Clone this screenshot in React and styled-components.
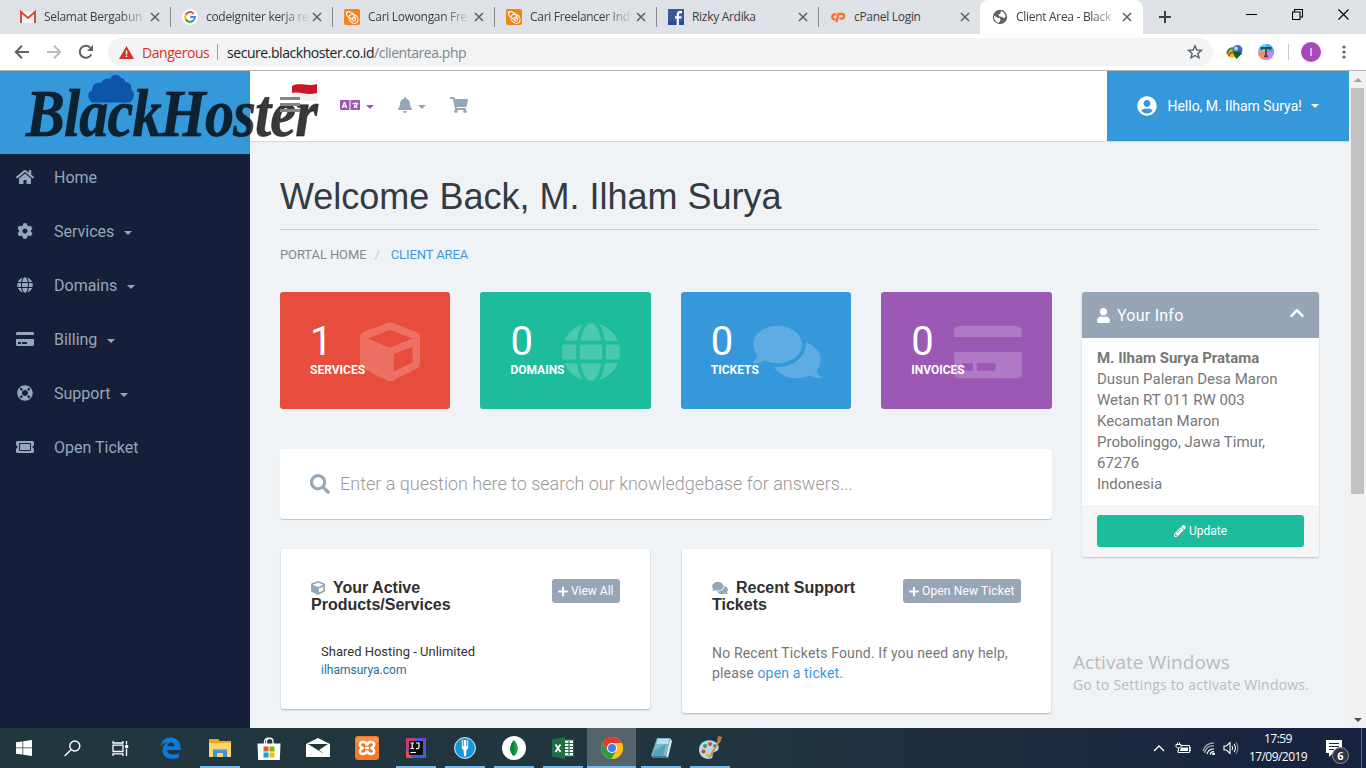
import React from 'react';
import styled, { createGlobalStyle, css } from 'styled-components';
import {
  FaHome, FaCog, FaGlobe, FaCreditCard, FaLifeRing, FaTicketAlt, FaCube, FaComments,
  FaSearch, FaUser, FaUserCircle, FaPencilAlt, FaPlus, FaBell, FaShoppingCart,
  FaChevronUp, FaLanguage,
} from 'react-icons/fa';

const Global = createGlobalStyle`
  *, *::before, *::after { box-sizing: border-box; }
  body { margin: 0; overflow: hidden; font-family: Roboto, "Liberation Sans", sans-serif; }
  svg { display: block; flex: none; }
`;

const segoe = css`font-family: "Open Sans", "Noto Sans", sans-serif;`;

const Screen = styled.div`
  width: 1366px; height: 768px; display: flex; flex-direction: column;
  overflow: hidden; background: #fff; position: relative;
`;

/* ---------- browser chrome ---------- */
const TabStrip = styled.div`
  height: 34px; flex: none; display: flex; background: #dee1e6; padding-left: 8px;
`;
const Tab = styled.div`
  width: ${p => (p.$active ? 163 : 162)}px; height: 34px; padding: 0 7px 0 12px;
  display: flex; align-items: center; position: relative;
  background: ${p => (p.$active ? '#fff' : 'transparent')};
  border-radius: 8px 8px 0 0;
  ${p => p.$divider && css`
    &::after { content: ''; position: absolute; right: -1px; top: 7px; width: 1px; height: 20px; background: #85878b; }
  `}
`;
const TabTitle = styled.span`
  ${segoe} font-size: 12px; letter-spacing: -0.3px; color: #3c4043; width: 103px; margin-left: 8px;
  white-space: nowrap; line-height: 18px;
  ${p => p.$fade && css`mask-image: linear-gradient(90deg, #000 72%, rgba(0, 0, 0, 0.12) 97%);`}
`;
const NewTab = styled.div`
  width: 44px; display: flex; align-items: center; justify-content: center;
`;
const WindowButtons = styled.div`
  margin-left: auto; display: flex; align-items: center; height: 29px;
  & > svg { margin-left: 35px; }
  padding-right: 17px;
`;
const Toolbar = styled.div`
  height: 37px; flex: none; display: flex; align-items: center; padding: 0 14px;
  background: #fff; border-bottom: 1px solid #b5b4b6;
  & > svg:nth-child(2) { margin-left: 16px; }
  & > svg:nth-child(3) { margin-left: 16px; }
`;
const Omnibox = styled.div`
  ${segoe} width: 1105px; height: 28px; margin-left: 14px; border-radius: 14px; background: #f1f3f4;
  display: flex; align-items: center; padding: 0 10px 0 11px; font-size: 14px; color: #202124; white-space: nowrap;
`;
const Danger = styled.span`color: #d93025; margin-left: 8px; letter-spacing: -0.45px; width: 68px;`;
const OmniRule = styled.span`width: 1px; height: 16px; background: #9a9da1; margin: 0 9px 0 7px;`;
const Url = styled.span`letter-spacing: -0.45px;`;
const UrlPath = styled.span`color: #80868b;`;
const Extensions = styled.div`
  margin-left: 13px; display: flex; align-items: center; flex: 1;
`;
const ExtGap = styled.span`width: 14px;`;
const ExtRule = styled.span`width: 1px; height: 16px; background: #c8cacd; margin: 0 12px 0 14px;`;
const Profile = styled.span`
  width: 20px; height: 20px; border-radius: 50%; background: #ab47bc; color: #fff;
  display: flex; align-items: center; justify-content: center; font-size: 11px; margin-right: 21px;
`;

/* ---------- page frame ---------- */
const Viewport = styled.div`height: 657px; flex: none; display: flex; background: #eff3f6;`;
const Sidebar = styled.aside`width: 250px; flex: none; background: #161f3a; position: relative; z-index: 2;`;
const Brand = styled.div`height: 83px; background: #3598db; position: relative;`;
const Nav = styled.nav`padding: 11px 0 0 15px; display: flex; flex-direction: column; gap: 30px;`;
const NavItem = styled.a`
  height: 24px; display: flex; align-items: center; color: #95a7b8; font-size: 16px;
`;
const NavIcon = styled.span`
  width: 20px; margin-right: 19px; display: flex; justify-content: center;
  svg { height: 16px; width: 18px; }
`;
const Caret = styled.span`
  width: 0; height: 0; border: 4px solid transparent; border-top-color: currentColor;
  border-bottom: 0; margin-left: ${p => p.$gap}px; margin-top: ${p => p.$drop || 3}px;
`;
const LogoText = styled.div`
  position: absolute; left: 26px; top: 4px; line-height: 76px; white-space: nowrap;
  font-family: "Liberation Serif", serif; font-weight: 700; font-style: italic; font-size: 68px;
  letter-spacing: -1px; color: rgba(0, 0, 0, 0.775); -webkit-text-stroke: 1px rgba(0, 0, 0, 0.5);
  transform: scaleX(0.855); transform-origin: 0 50%; pointer-events: none;
`;
const LogoCloud = styled.svg`position: absolute; left: 87px; top: 3px;`;
const LogoFlag = styled.svg`position: absolute; left: 291px; top: 12px;`;

const Page = styled.div`width: 1099px; flex: none; display: flex; flex-direction: column;`;
const TopBar = styled.header`
  height: 71px; background: #fff; border-bottom: 1px solid #d5d9dd; display: flex; align-items: center;
  padding: 0 0 2px 30px; flex: none; color: #94a6b7;
`;
const Burger = styled.span`
  width: 20px; height: 15px; border-top: 3px solid #858585; border-bottom: 3px solid #858585;
  display: flex; align-items: center; margin-right: 40px; margin-bottom: 1px;
  position: relative; z-index: 3;
  &::before { content: ''; width: 20px; height: 3px; background: #858585; }
`;
const TopItem = styled.span`
  display: flex; align-items: center; margin-right: ${p => p.$mr}px; color: ${p => p.$color || 'inherit'};
  svg { height: 16px; width: ${p => p.$w}px; }
`;
const UserMenu = styled.div`
  margin-left: auto; align-self: flex-start; height: 70px; width: 242px; background: #3598db; color: #fff;
  display: flex; align-items: center; padding: 0 0 1px 30px; font-size: 14px; letter-spacing: -0.02px;
  svg { width: 20px; height: 20px; margin-right: 10.5px; }
`;
const Content = styled.main`padding: 0 30px; display: flex; flex-direction: column;`;
const Heading = styled.h1`
  margin: 0; height: 88px; padding-top: 33px; border-bottom: 1px solid #c8ccd1;
  font: 400 36px/44px "Liberation Sans", Arial, sans-serif; color: #333a42;
`;
const Crumbs = styled.div`
  display: flex; margin-top: 15px; height: 20px; line-height: 20px; font-size: 13px; color: #888; margin-bottom: 27px;
  letter-spacing: -0.1px;
`;
const Slash = styled.span`color: #ccc; margin: 0 11px 0 8px;`;
const Current = styled.span`color: #3f97d9;`;
const Columns = styled.div`display: flex; gap: 30.4px; align-items: flex-start;`;
const Main = styled.section`width: 771.6px; flex: none; display: flex; flex-direction: column;`;
const Tiles = styled.div`display: grid; grid-template-columns: repeat(4, 1fr); gap: 30px;`;
const Tile = styled.div`
  height: 117px; border-radius: 3px; background: ${p => p.$bg}; color: #fff; padding: 30px; position: relative;
  display: flex; flex-direction: column;
`;
const TileIcon = styled.span`
  position: absolute; right: 30px; top: 30px; opacity: 0.2;
  svg { height: 60px; width: ${p => p.$w}px; }
`;
const TileNumber = styled.strong`font-size: 40px; font-weight: 400; line-height: 40px; position: relative;`;
const TileLabel = styled.span`font-size: 12px; font-weight: 700; line-height: 16px; position: relative;`;
const SearchBox = styled.div`
  margin-top: 40px; height: 70px; border-radius: 3px; background: #fff; box-shadow: 0 1px 1px rgba(0, 0, 0, 0.18);
  display: flex; align-items: center; padding-left: 30px; padding-bottom: 1px; color: #999; font-size: 18px; font-weight: 300;
  svg { width: 20px; height: 20px; color: #95a7b8; margin-right: 10px; }
`;
const Cards = styled.div`display: flex; gap: 32px; margin-top: 30px; align-items: flex-start; padding-left: 1px;`;
const Card = styled.div`
  width: 369px; height: ${p => p.$h}px; background: #fff; border-radius: 3px; box-shadow: 0 1px 2px rgba(0, 0, 0, 0.25);
  padding: 30px;
`;
const CardHead = styled.div`display: flex; justify-content: space-between; align-items: flex-start;`;
const CardTitle = styled.h3`
  margin: 0; width: 165px; font: 700 16px/17px "Liberation Sans", Arial, sans-serif; color: #2f2f2f;
  svg { display: inline-block; height: 14px; width: ${p => p.$w}px; color: #95a7b8; margin-right: 8px; vertical-align: -2px; }
`;
const SmallButton = styled.span`
  height: 24px; border-radius: 3px; background: #96a6b7; color: #fff; font-size: 12px; padding: 0 6.5px;
  display: flex; align-items: center; white-space: nowrap; letter-spacing: ${p => p.$ls || 0}px;
  svg { width: 10px; height: 11px; margin-right: 2.5px; }
`;
const Product = styled.div`margin: 29px 0 0 10px; font-size: 13px; line-height: 19px; color: #333;`;
const ProductDomain = styled.div`font-size: 12px; line-height: 18px; color: #1f6e94;`;
const Note = styled.p`margin: 30px -10px 0 0; font-size: 14px; line-height: 20px; color: #777; letter-spacing: 0.15px;`;
const Link = styled.a`color: #3f97d9;`;
const Panel = styled.aside`
  width: 237px; border-radius: 3px; overflow: hidden; box-shadow: 0 1px 2px rgba(0, 0, 0, 0.2); background: #fff;
`;
const PanelHead = styled.div`
  height: 46px; background: #96a6b7; color: #fff; display: flex; align-items: center; padding: 0 15px; font-size: 16px;
  letter-spacing: 0.25px;
  & > svg:first-child { width: 13px; height: 15px; margin-right: 7px; }
  & > svg:last-child { width: 14px; height: 16px; margin: -4px 0 0 auto; }
`;
const PanelBody = styled.div`padding: 10px 15px; font-size: 15px; line-height: 21px; color: #777;`;
const PanelFoot = styled.div`height: 52px; padding: 10px 15px; background: #f5f5f5;`;
const Update = styled.div`
  height: 32px; border-radius: 3px; background: #1cbc9c; color: #fff; font-size: 12px;
  display: flex; align-items: center; justify-content: center;
  svg { width: 12px; height: 12px; margin-right: 3px; }
`;
const Scrollbar = styled.div`
  width: 17px; flex: none; background: #f1f1f1; display: flex; flex-direction: column; align-items: center;
`;
const ScrollArrow = styled.span`
  height: 17px; width: 17px; display: flex; align-items: center; justify-content: center;
`;
const Thumb = styled.span`width: 13px; height: 406px; background: #c1c1c1; margin-bottom: auto;`;
const Watermark = styled.div`
  ${segoe} position: absolute; left: 1073px; top: 650px; color: #b9bbbd; white-space: nowrap; z-index: 4;
`;
const WatermarkTitle = styled.div`font-size: 19px; line-height: 24px; letter-spacing: 0.05px;`;
const WatermarkText = styled.div`font-size: 14px; line-height: 22px; letter-spacing: 0.19px;`;

/* ---------- taskbar ---------- */
const Taskbar = styled.footer`
  height: 40px; flex: none; display: flex; color: #fff;
  background: linear-gradient(90deg, #22363e 0%, #21353f 50%, #1d2c3f 75%, #18233f 95%, #172240 100%);
`;
const Task = styled.div`
  width: ${p => p.$w || 49}px; height: 40px; display: flex; align-items: center; justify-content: center; position: relative;
  background: ${p => (p.$active ? '#53646d' : 'transparent')};
  &::after {
    content: ''; position: absolute; bottom: 0; height: 2px; background: #76b9ed;
    width: ${p => (p.$active ? 49 : p.$open ? 40 : 0)}px;
  }
`;
const Gap = styled.span`width: 2.6px; margin-right: -0.3px;`;
const Tray = styled.div`margin-left: auto; display: flex; align-items: center;`;
const TrayIcon = styled.svg`margin-left: ${p => p.$ml}px;`;
const Clock = styled.div`
  ${segoe} width: 66px; font-size: 12px; line-height: 18px; text-align: center; letter-spacing: -0.55px; margin: 0 0 0 6px;
`;
const Notices = styled.div`position: relative; margin: 0 12px 0 14px; padding-top: 4px; width: 24px; height: 24px;`;
const Badge = styled.span`
  position: absolute; left: 7px; top: 11px; width: 17px; height: 17px; border-radius: 50%;
  background: #30343f; border: 1px solid #8e939b; font: 700 11px/15px "Open Sans", sans-serif; text-align: center;
`;
const DesktopEdge = styled.span`width: 5px; height: 40px; border-left: 1px solid #5b6580;`;
const StarIcon = styled.svg`margin-left: auto;`;

const Stroke = ({ w = 16, h = 16, d, sw = 1.5, c = '#5f6368', vb }) => (
  <svg width={w} height={h} viewBox={vb || `0 0 ${w} ${h}`} fill="none" stroke={c} strokeWidth={sw}><path d={d} /></svg>
);
const Close = () => <Stroke w={16} h={16} d="M4 4l8 8M12 4l-8 8" sw={1.6} />;

const Gmail = () => (
  <svg width="16" height="16" viewBox="0 0 16 16"><path d="M1 3h14v11H1z" fill="#f2f2f2" /><path d="M1 14V3l7 6 7-6v11" fill="none" stroke="#d54b3d" strokeWidth="2" /></svg>
);
const Google = () => (
  <svg width="16" height="16" viewBox="0 0 16 16"><circle cx="8" cy="8" r="8" fill="#fff" />
    <g fill="none" strokeWidth="2"><path d="M11.6 4.6A4.9 4.9 0 0 0 3.7 5.7" stroke="#ea4335" /><path d="M3.7 5.7a4.9 4.9 0 0 0 0 4.6" stroke="#fbbc05" /><path d="M3.7 10.3a4.9 4.9 0 0 0 7.6 1.3" stroke="#34a853" /><path d="M11.3 11.6A4.9 4.9 0 0 0 12.9 8H8.2" stroke="#4285f4" /></g></svg>
);
const Bee = () => (
  <svg width="16" height="16" viewBox="0 0 16 16"><rect width="16" height="16" rx="2" fill="#f08519" />
    <g fill="none" stroke="#fff" strokeWidth="1"><ellipse cx="9.500" cy="9.700" rx="5" ry="4" transform="rotate(42 9.500 9.700)" /><ellipse cx="6.600" cy="6.300" rx="4.800" ry="2.600" transform="rotate(38 6.600 6.300)" /><circle cx="9.800" cy="10" r="2" /><path d="M1.500 2.500Q2.500 4 4 4" /></g></svg>
);
const Facebook = () => (
  <svg width="16" height="16" viewBox="0 0 16 16"><rect width="16" height="16" fill="#3b5998" /><path d="M0 12h16v4H0z" fill="#2c4a94" /><path d="M14 3.200h-2c-1.700 0-2.200.8-2.200 2.400V16M7 8.400h6.500" stroke="#fff" strokeWidth="2.200" fill="none" /></svg>
);
const CPanel = () => (
  <svg width="16" height="12" viewBox="0 0 17 12" fill="none" stroke="#ff6c2c" strokeWidth="2.400"><path d="M7 3.200H4.500a2.800 2.800 0 0 0 0 5.400H6M6.800 11.500L9.200 2.600h3.300a2.500 2.500 0 0 1 0 5H10" /></svg>
);
const World = () => (
  <svg width="16" height="16" viewBox="0 0 16 16"><circle cx="8" cy="8" r="7.200" fill="#5f6368" /><path d="M8.700 2.300c2.800.3 4.800 2.600 5 5.400L12 9.300l-2-1.500-2.500-.3-1-2 2-1zM2 6.500l3.500 2.200 2.500.6.500 2-2 2.700C3.700 13 1.500 10 2 6.500z" fill="#fff" /></svg>
);
const Idm = () => (
  <svg width="18" height="16" viewBox="0 0 18 16"><ellipse cx="6" cy="9" rx="5.500" ry="4.500" fill="#e6b92f" /><path d="M1.500 10c0-5 4-7 8-5" stroke="#279a3c" strokeWidth="2" fill="none" /><path d="M3 12c1-4 3-4 6-4" stroke="#d8382c" strokeWidth="1.500" fill="none" /><circle cx="11.500" cy="6" r="5" fill="#3b6fc2" /><circle cx="10" cy="4.500" r="2" fill="#b9d3f5" /><path d="M7 8.500l8-1.500-1 2h2.500l-6 6-2-3z" fill="#11631c" /></svg>
);
const TypeExt = () => (
  <svg width="16" height="16" viewBox="0 0 16 16"><circle cx="8" cy="8" r="8" fill="#5cd3ee" /><path d="M0 8h8v8A8 8 0 0 1 0 8z" fill="#ff8a6b" /><path d="M8 8h8a8 8 0 0 1-8 8z" fill="#c985ee" /><path d="M8 0a8 8 0 0 1 8 8H8z" fill="#4aa5f5" /><path d="M3.500 6V4h9v2M8 4v8M6 12.300h4" stroke="#444" strokeWidth="1.800" fill="none" /></svg>
);

const tabs = [
  { icon: <Gmail />, title: 'Selamat Bergabun', fade: true, divider: true },
  { icon: <Google />, title: 'codeigniter kerja re', fade: true, divider: true },
  { icon: <Bee />, title: 'Cari Lowongan Fre', fade: true, divider: true },
  { icon: <Bee />, title: 'Cari Freelancer Ind', fade: true, divider: true },
  { icon: <Facebook />, title: 'Rizky Ardika', divider: true },
  { icon: <CPanel />, title: 'cPanel Login' },
  { icon: <World />, title: 'Client Area - Black', fade: true, active: true },
];

const nav = [
  { icon: <FaHome />, label: 'Home' },
  { icon: <FaCog />, label: 'Services', menu: true },
  { icon: <FaGlobe />, label: 'Domains', menu: true },
  { icon: <FaCreditCard />, label: 'Billing', menu: true },
  { icon: <FaLifeRing />, label: 'Support', menu: true },
  { icon: <FaTicketAlt />, label: 'Open Ticket' },
];

const tiles = [
  { n: 1, label: 'SERVICES', bg: '#e84c3d', icon: <FaCube />, w: 60 },
  { n: 0, label: 'DOMAINS', bg: '#1cbc9c', icon: <FaGlobe />, w: 60 },
  { n: 0, label: 'TICKETS', bg: '#3598db', icon: <FaComments />, w: 68 },
  { n: 0, label: 'INVOICES', bg: '#9b58b5', icon: <FaCreditCard />, w: 68 },
];

const Windows = () => <svg width="16" height="16" viewBox="0 0 16 16" fill="#fff"><path d="M0 2.300l6.500-.9v6.200H0zM7.200 1.300L16 0v7.600H7.200zM0 8.300h6.500v6.300L0 13.700zM7.200 8.300H16V16l-8.800-1.200z" /></svg>;
const Lens = () => <svg width="17" height="17" viewBox="0 0 17 17" fill="none" stroke="#fff" strokeWidth="1.400"><circle cx="10.800" cy="6" r="5" /><path d="M7.200 9.600L.7 16" /></svg>;
const TaskView = () => <svg width="17" height="17" viewBox="0 0 17 17" fill="none" stroke="#fff" strokeWidth="1.300"><path d="M1 1v2h10V1M1 16v-2.200h10V16M1 5.200h10v6.300H1zM14.500 1v3.500M14.500 8.500V16" /><path d="M13.200 5h3v3h-3z" fill="#fff" stroke="none" /></svg>;
const Edge = () => <svg width="21" height="22" viewBox="0 0 21 22"><path d="M.5 9.500C1.300 3.700 5.300.5 10.600.5c6 0 9.900 4.200 9.900 10v2.400H7.200c.2 3 2.700 4.600 6 4.600 2.200 0 4.100-.5 5.900-1.600v4.400c-2 1.100-4.200 1.500-6.900 1.500-6 0-9.700-3.500-9.700-8.600 0-3.600 1.800-6.400 5-8C4 5.800 1.800 7.500.5 9.500zm6.800-.2h7.200c0-2.500-1.200-3.900-3.500-3.900-2 0-3.300 1.400-3.700 3.900z" fill="#0a7bdc" /></svg>;
const Explorer = () => <svg width="22" height="19" viewBox="0 0 22 19"><path d="M0 0h9l2 2h11v16H0z" fill="#e9a820" /><path d="M0 4h22v14H0z" fill="#fcd668" /><path d="M4 18v-8h14v8h-4v-4H8v4z" fill="#3f8fd9" /><path d="M4 10h14v1.500H4z" fill="#65b4ee" /></svg>;
const Store = () => <svg width="24" height="23" viewBox="0 0 24 23"><path d="M7.500 8V4.500a3.500 3.500 0 0 1 5-3M9.500 8V4.500a3.200 3.200 0 0 1 6.500 0V8" fill="none" stroke="#fff" strokeWidth="1.300" /><path d="M.5 6.500h23L22.800 23H1.200z" fill="#fff" /><path d="M6.500 9.500h5v5h-5z" fill="#f25022" /><path d="M12.500 9.500h5v5h-5z" fill="#7fba00" /><path d="M6.500 15.500h5v5h-5z" fill="#00a4ef" /><path d="M12.500 15.500h5v5h-5z" fill="#ffb900" /></svg>;
const Mail = () => <svg width="24" height="20" viewBox="0 0 24 20"><path d="M0 6L12 0l12 6v13H0z" fill="#fff" /><path d="M2 6h20l-9 6 5 4L2 6z" fill="#22363e" /></svg>;
const Xampp = () => <svg width="24" height="24" viewBox="0 0 24 24"><rect width="24" height="24" rx="3" fill="#f4772a" /><rect x="1" y="1" width="22" height="6" rx="2" fill="#f9a36a" opacity=".6" /><path d="M12 9.500C11.500 5 4.500 5 4.800 9c.1 1.600 1.500 2.200 2.500 3-1 .8-2.500 1.600-2.500 3.500 0 3.500 6.500 3.300 7.200-1M12 9.500C12.500 5 19.500 5 19.200 9c-.1 1.600-1.500 2.200-2.500 3 1 .8 2.500 1.600 2.500 3.500 0 3.500-6.500 3.300-7.200-1M10 12h4" fill="none" stroke="#fff" strokeWidth="2.600" /></svg>;
const IntelliJ = () => <svg width="20" height="20" viewBox="0 0 20 20"><path d="M0 0h20v20H0z" fill="#3b5fe0" /><path d="M0 0h11L0 13z" fill="#c93a6f" /><path d="M0 10l6 10H0z" fill="#ee4b55" /><path d="M20 0v10l-7-10z" fill="#7048c8" /><path d="M3 3h14v14H3z" fill="#111" /><path d="M4.500 5h3.500M4.500 10.500H8M6.200 5v5.500M10 5h3v4q0 1.600-1.600 1.600H10M4.500 14.500H10" stroke="#fff" strokeWidth="1.200" fill="none" /></svg>;
const Fork = () => <svg width="22" height="22" viewBox="0 0 22 22"><circle cx="11" cy="11" r="10.400" fill="#1495d4" stroke="#e8f5fb" strokeWidth="1" /><path d="M7.800 3v7c0 2 1 2.500 1.700 3l.5 6q1 1 2 0l.5-6c.7-.5 1.700-1 1.700-3V3h-1v6h-1V3h-2.400v6h-1V3z" fill="#fff" /></svg>;
const Leaf = () => <svg width="24" height="24" viewBox="0 0 24 24"><circle cx="12" cy="12" r="12" fill="#fff" /><path d="M12 4c5.500 6 4.500 13 0 16-4.500-3-5.500-10 0-16z" fill="#14a04b" /><path d="M12 4c-5.500 6-4.500 13 0 16z" fill="#0b803a" /></svg>;
const Excel = () => <svg width="22" height="22" viewBox="0 0 22 22"><path d="M12 3h9.500v16H12z" fill="#fff" stroke="#1d7044" /><path d="M13 6.500h8M13 9.500h8M13 12.500h8M13 15.500h8M17 4v14" stroke="#1d7044" strokeWidth="1.200" /><path d="M0 2.500L13 0v22L0 19.500z" fill="#1d7044" /><path d="M3.500 7.500l5 7.500M8.500 7.500l-5 7.500" stroke="#fff" strokeWidth="1.800" /></svg>;
const Chrome = () => <svg width="22" height="22" viewBox="0 0 22 22"><circle cx="11" cy="11" r="11" fill="#fbc116" /><path d="M1.500 5.500A11 11 0 0 0 10.500 22L15.300 13.500 11 11 6.700 13.500z" fill="#269f48" /><path d="M11 6h9.800A11 11 0 0 1 10.500 22l4.800-8.500z" fill="#fbc116" /><path d="M1.500 5.500A11 11 0 0 1 20.800 6H11a5 5 0 0 0-4.500 7z" fill="#e33b2e" /><circle cx="11" cy="11" r="5" fill="#fff" /><circle cx="11" cy="11" r="4" fill="#4080ee" /></svg>;
const Notepad = () => <svg width="22" height="22" viewBox="0 0 22 22"><path d="M7 1h13l-4 18H1z" fill="#79b9cf" /><path d="M8 2h11l-1 5H6.500z" fill="#bde1ec" /><path d="M20 1l2 3-4 17-2-2z" fill="#d9e7ec" /><path d="M1 19h15l2 2H3z" fill="#4a7b8c" /><path d="M5 13l11-6-3 12H2z" fill="#4c98b4" opacity=".7" /></svg>;
const Paint = () => <svg width="24" height="24" viewBox="0 0 24 24"><path d="M1 14C1 7 7 3.500 13 4.500c7 1 9 6 7 9.500-1 2-4 1-5 3s1 6-4 6C5 23 1 19 1 14z" fill="#b5d9ef" /><circle cx="7" cy="10" r="2" fill="#3a9d42" /><circle cx="12" cy="8" r="2" fill="#d94c32" /><circle cx="5.500" cy="15.500" r="2" fill="#d6412d" /><circle cx="9.500" cy="19" r="1.800" fill="#e8b938" /><circle cx="17" cy="10" r="1.800" fill="#295fb7" /><path d="M11 22L20.500 6" stroke="#d79239" strokeWidth="2" /><path d="M19 6l1-6 4 1-2 6z" fill="#b97c46" /></svg>;

const tasks = [
  { icon: <Edge /> }, { icon: <Explorer />, open: true }, { icon: <Store /> }, { icon: <Mail /> },
  { icon: <Xampp /> }, { icon: <IntelliJ />, open: true }, { icon: <Fork />, open: true },
  { icon: <Leaf />, open: true }, { icon: <Excel />, open: true }, { icon: <Chrome />, active: true },
  { icon: <Notepad />, open: true }, { icon: <Paint />, open: true },
];

function BrowserChrome() {
  return (
    <>
      <TabStrip>
        {tabs.map((t, i) => (
          <Tab key={i} $active={t.active} $divider={t.divider}>
            {t.icon}<TabTitle $fade={t.fade}>{t.title}</TabTitle><Close />
          </Tab>
        ))}
        <NewTab><Stroke w={14} h={14} d="M7 1v12M1 7h12" sw={2} c="#3c4043" /></NewTab>
        <WindowButtons>
          <Stroke w={11} h={11} d="M0 5.500h11" sw={1} c="#000" />
          <Stroke w={11} h={11} d="M.5 3h7.500v7.500H.5zM2.500 3V.5h8V8H8" sw={1.1} c="#000" />
          <Stroke w={11} h={11} d="M.5.5l10 10M10.500.5l-10 10" sw={1.1} c="#000" />
        </WindowButtons>
      </TabStrip>
      <Toolbar>
        <Stroke w={16} h={16} d="M15 8H2M8 1.800L1.800 8 8 14.200" sw={2} />
        <Stroke w={16} h={16} d="M1 8h13M8 1.800L14.200 8 8 14.200" sw={2} c="#bbbdc0" />
        <svg width="16" height="16" viewBox="0 0 16 16"><path d="M13.300 10.300A6 6 0 1 1 12.300 3.800" fill="none" stroke="#5f6368" strokeWidth="2" /><path d="M15 1v6H9z" fill="#5f6368" /></svg>
        <Omnibox>
          <svg width="15" height="13" viewBox="0 0 15 13"><path d="M7.500 0L15 13H0z" fill="#d93025" /><path d="M7.500 4.500v4M7.500 9.500v1.500" stroke="#fff" strokeWidth="1.500" /></svg>
          <Danger>Dangerous</Danger><OmniRule />
          <Url>secure.blackhoster.co.id<UrlPath>/clientarea.php</UrlPath></Url>
          <StarIcon width="16" height="16" viewBox="0 0 16 16"><path d="M8 1.800l1.800 4.200 4.600.4-3.500 3 1.100 4.500L8 11.500l-4 2.400 1.100-4.500-3.500-3 4.600-.4z" fill="none" stroke="#5f6368" strokeWidth="1.400" /></StarIcon>
        </Omnibox>
        <Extensions>
          <Idm /><ExtGap /><TypeExt /><ExtRule /><Profile>I</Profile>
          <svg width="4" height="14" viewBox="0 0 4 14" fill="#5f6368"><circle cx="2" cy="2" r="1.600" /><circle cx="2" cy="7" r="1.600" /><circle cx="2" cy="12" r="1.600" /></svg>
        </Extensions>
      </Toolbar>
    </>
  );
}

function Logo() {
  return (
    <Brand>
      <LogoText>BlackHoster</LogoText>
      <LogoCloud width="48" height="29" viewBox="0 0 48 29">
        <path d="M5 28.500C0 25 0 18 5 16.500 5 10 10 8 14 9 17 4 21 4 23 5 25 0 31-1 34 4c3 0 4 2 4 4 5 0 7 4 6.500 8 4 3 3 9-1.500 12.500z" fill="#0d55a9" />
      </LogoCloud>
      <LogoFlag width="27" height="20" viewBox="0 0 27 20">
        <path d="M1 10c8-3 15 3 25 0v7c-10 3-17-2-25 0z" fill="#f0f0f0" />
        <path d="M1 3c8-4 15 1 25-2v9c-10 3-17-2-25 0z" fill="#ce1526" />
      </LogoFlag>
    </Brand>
  );
}

export default function App() {
  return (
    <Screen>
      <Global />
      <BrowserChrome />
      <Viewport>
        <Sidebar>
          <Logo />
          <Nav>
            {nav.map(n => (
              <NavItem key={n.label}><NavIcon>{n.icon}</NavIcon>{n.label}{n.menu && <Caret $gap={10} />}</NavItem>
            ))}
          </Nav>
        </Sidebar>
        <Page>
          <TopBar>
            <Burger />
            <TopItem $mr={22} $w={20} $color="#9b58b5"><FaLanguage /><Caret $gap={6} /></TopItem>
            <TopItem $mr={24} $w={18}><FaBell /><Caret $gap={4} /></TopItem>
            <TopItem $mr={0} $w={18}><FaShoppingCart /></TopItem>
            <UserMenu><FaUserCircle />Hello, M. Ilham Surya!<Caret $gap={9} $drop={1} /></UserMenu>
          </TopBar>
          <Content>
            <Heading>Welcome Back, M. Ilham Surya</Heading>
            <Crumbs>PORTAL HOME<Slash>/</Slash><Current>CLIENT AREA</Current></Crumbs>
            <Columns>
              <Main>
                <Tiles>
                  {tiles.map(t => (
                    <Tile key={t.label} $bg={t.bg}>
                      <TileIcon $w={t.w}>{t.icon}</TileIcon><TileNumber>{t.n}</TileNumber><TileLabel>{t.label}</TileLabel>
                    </Tile>
                  ))}
                </Tiles>
                <SearchBox><FaSearch />Enter a question here to search our knowledgebase for answers...</SearchBox>
                <Cards>
                  <Card $h={160}>
                    <CardHead>
                      <CardTitle $w={14}><FaCube />Your Active Products/Services</CardTitle>
                      <SmallButton><FaPlus />View All</SmallButton>
                    </CardHead>
                    <Product>Shared Hosting - Unlimited<ProductDomain>ilhamsurya.com</ProductDomain></Product>
                  </Card>
                  <Card $h={164}>
                    <CardHead>
                      <CardTitle $w={16}><FaComments />Recent Support Tickets</CardTitle>
                      <SmallButton $ls={0.15}><FaPlus />Open New Ticket</SmallButton>
                    </CardHead>
                    <Note>No Recent Tickets Found. If you need any help, please <Link>open a ticket</Link>.</Note>
                  </Card>
                </Cards>
              </Main>
              <Panel>
                <PanelHead><FaUser />Your Info<FaChevronUp /></PanelHead>
                <PanelBody>
                  <strong>M. Ilham Surya Pratama</strong><br />Dusun Paleran Desa Maron Wetan RT 011 RW 003 Kecamatan Maron<br />Probolinggo, Jawa Timur, 67276<br />Indonesia
                </PanelBody>
                <PanelFoot><Update><FaPencilAlt />Update</Update></PanelFoot>
              </Panel>
            </Columns>
          </Content>
        </Page>
        <Scrollbar>
          <ScrollArrow><svg width="8" height="4" viewBox="0 0 8 4"><path d="M0 4l4-4 4 4z" fill="#a3a3a3" /></svg></ScrollArrow>
          <Thumb />
          <ScrollArrow><svg width="8" height="4" viewBox="0 0 8 4"><path d="M0 0h8L4 4z" fill="#505050" /></svg></ScrollArrow>
        </Scrollbar>
      </Viewport>
      <Watermark>
        <WatermarkTitle>Activate Windows</WatermarkTitle>
        <WatermarkText>Go to Settings to activate Windows.</WatermarkText>
      </Watermark>
      <Taskbar>
        <Task $w={48}><Windows /></Task>
        <Task $w={48}><Lens /></Task>
        <Task $w={48}><TaskView /></Task>
        <Gap />
        {tasks.map((t, i) => <Task key={i} $open={t.open} $active={t.active}>{t.icon}</Task>)}
        <Tray>
          <Stroke w={12} h={8} d="M1 7l5-5 5 5" c="#fff" sw={1.3} />
          <TrayIcon $ml={10} width="16" height="13" viewBox="0 0 16 13" fill="none" stroke="#fff"><path d="M6 3.500h8.500v7H3V8" /><path d="M6 5.500h7v3.500H5z" fill="#fff" stroke="none" /><path d="M14.500 5.500H16v3h-1.500M1 2.500h5v2c0 2-5 2-5 0zM2.500.5v2M4.500.5v2M3.500 6v3" /></TrayIcon>
          <TrayIcon $ml={11} width="13" height="13" viewBox="0 0 13 13" fill="none" stroke="#fff" strokeWidth="1.200"><g opacity=".65"><path d="M1 9A10 10 0 0 1 12 1.200M2.500 11A8 8 0 0 1 12 4" /></g><path d="M5 12A7 7 0 0 1 12 7M8 12.500a4 4 0 0 1 4-3" /><circle cx="11.500" cy="12" r=".8" fill="#fff" /></TrayIcon>
          <TrayIcon $ml={8} width="16" height="14" viewBox="0 0 16 14" fill="none" stroke="#fff" strokeWidth="1.100"><path d="M1 5h2.500L7 1.500v11L3.500 9H1zM9 5q1.500 2 0 4M11 3q3 4 0 8" /><path d="M13 1.500q4 5.500 0 11" opacity=".5" /></TrayIcon>
          <Clock>17:59<br />17/09/2019</Clock>
          <Notices>
            <svg width="17" height="17" viewBox="0 0 17 17"><path d="M1 0h16v13H8l-4 4v-4H1z" fill="#fff" /><path d="M4 3.500h10M4 6.500h10M4 9.500h5" stroke="#1a2540" strokeWidth="1.200" /></svg>
            <Badge>6</Badge>
          </Notices>
          <DesktopEdge />
        </Tray>
      </Taskbar>
    </Screen>
  );
}
